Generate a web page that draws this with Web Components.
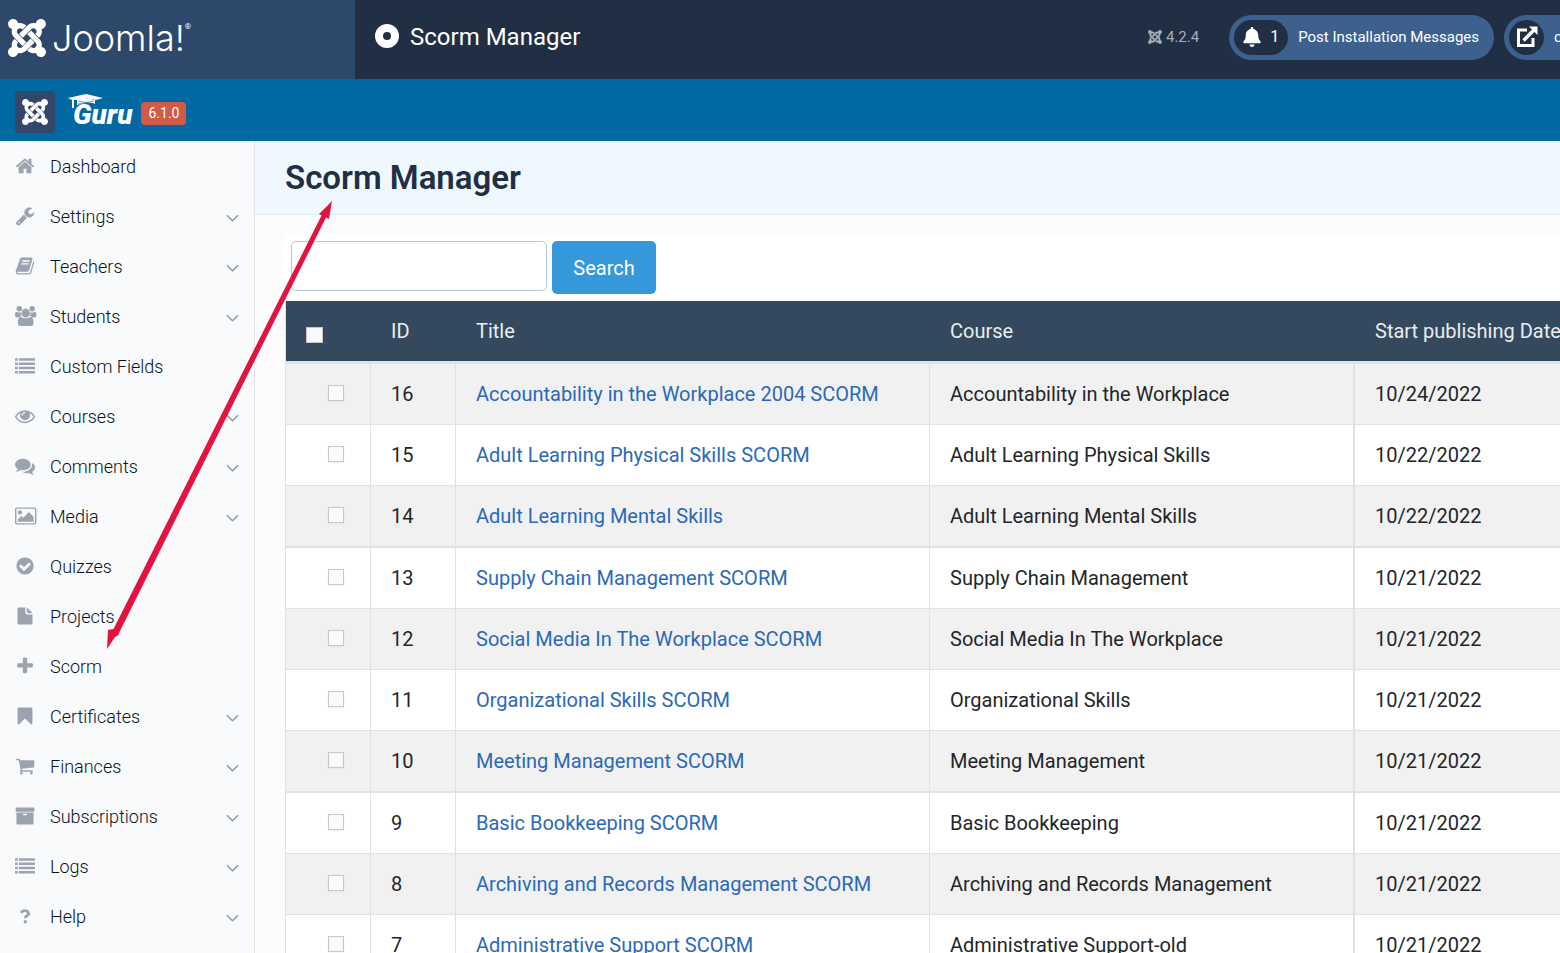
<!DOCTYPE html>
<html lang="en">
<head>
<meta charset="utf-8">
<title>Scorm Manager</title>
<style>
  html, body { margin: 0; height: 100%; }
  body { font-family: Roboto, "Liberation Sans", sans-serif; color: #22262a; }
</style>
</head>
<body>
<guru-app></guru-app>
<script>
const JOOMLA = 'M.6 92.1C.6 58.8 27.4 32 60.4 32c30 0 54.5 21.9 59.2 50.2 32.6-7.6 67.1.6 96.5 30l-44.3 44.3c-20.5-20.5-42.6-16.3-55.4-3.5-14.3 14.3-14.3 37.9 0 52.2l99.5 99.5-44 44.3c-87.7-87.2-49.7-49.7-99.8-99.7-26.8-26.5-35-64.8-24.8-98.9C20.4 144.6.6 120.7.6 92.1zm129.5 116.4l44.3 44.3c10-10 89.7-89.7 99.7-99.8 14.3-14.3 37.6-14.3 51.9 0 12.8 12.8 17 35-3.5 55.4l44 44.3c31.2-31.2 38.5-67.6 28.9-101.2 29.2-4.1 51.9-29.2 51.9-59.5 0-33.2-26.8-60.1-59.8-60.1-30.3 0-55.4 22.5-59.5 51.6-33.8-9.9-71.7-1.5-98.3 25.1-18.3 19.1-71.1 71.5-99.6 99.9zm266.3 152.2c8.2-32.7-.9-68.5-26.3-93.9-11.8-12.2 5 4.7-99.5-99.7l-44.3 44.3 99.7 99.7c14.3 14.3 14.3 37.6 0 51.9-12.8 12.8-35 17-55.4-3.5l-44 44.3c27.6 30.2 68 38.8 102.7 28 5.5 27.4 29.7 48.1 58.9 48.1 33 0 59.8-26.8 59.8-60.1 0-30.2-22.5-55-51.6-59.1zm-84.3-53.1l-44-44.3c-87 86.4-50.4 50.4-99.7 99.8-14.3 14.3-37.6 14.3-51.9 0-13.1-13.4-16.9-35.3 3.2-55.4l-44-44.3c-30.2 30.2-38 65.2-29.5 98.3-26.7 6-46.2 29.9-46.2 58.2C0 453.2 26.8 480 59.8 480c28.6 0 52.5-19.8 58.6-46.7 32.7 8.2 68.5-.6 94.2-26 32.1-32 12.2-12.4 99.5-99.7z';
const listRows = [196, 580, 964, 1348].map(y =>
  `<rect x="0" y="${y}" width="256" height="224" rx="28"/><rect x="350" y="${y}" width="1442" height="224" rx="28"/>`).join('');
const p = d => `<path d="${d}"/>`;
const ICONS = {
  joomla: ['0 32 448 448', p(JOOMLA)],
  home: ['0 0 1792 1792', p('M1472 992v480q0 26-19 45t-45 19h-384v-384h-256v384h-384q-26 0-45-19t-19-45v-480q0-1 .5-3t.5-3l575-474 575 474q1 2 1 6zm223-69l-62 74q-8 9-21 11h-3q-13 0-21-7l-692-577-692 577q-12 8-24 7-13-2-21-11l-62-74q-8-10-7-23.5t11-21.5l719-599q32-26 76-26t76 26l244 204v-195q0-14 9-23t23-9h192q14 0 23 9t9 23v408l219 182q10 8 11 21.5t-7 23.5z')],
  wrench: ['0 0 1792 1792', p('M448 1472q0-26-19-45t-45-19-45 19-19 45 19 45 45 19 45-19 19-45zm644-420l-682 682q-37 37-90 37-52 0-91-37l-106-108q-38-36-38-90 0-53 38-91l681-681q39 98 114.5 173.5t173.5 114.5zm634-435q0 39-23 106-47 134-164.5 217.5t-258.5 83.5q-185 0-316.5-131.5t-131.5-316.5 131.5-316.5 316.5-131.5q58 0 121.5 16.5t107.5 46.5q16 11 16 28t-16 28l-293 169v224l193 107q5-3 79-48.5t135.5-81 70.5-35.5q15 0 23.5 10t8.5 25z')],
  book: ['0 0 1792 1792', p('M1703 478q40 57 18 129l-275 906q-19 64-76.5 107.5t-122.5 43.5h-923q-77 0-148.5-53.5t-99.5-131.5q-24-67-2-127 0-4 3-27t4-37q1-8-3-21.5t-3-19.5q2-11 8-21t16.5-23.5 16.5-23.5q23-38 45-91.5t30-91.5q3-10 .5-30t-.5-28q3-11 17-28t17-23q21-36 42-92t25-90q1-9-2.5-32t.5-28q4-13 22-30.5t22-22.5q19-26 42.5-84.5t27.5-96.5q1-8-3-25.5t-2-26.5q2-8 9-18t18-23 17-21q8-12 16.5-30.5t15-35 16-36 19.5-32 26.5-23.5 36-11.5 47.5 5.5l-1 3q38-9 51-9h761q74 0 114 56t18 130l-274 906q-36 119-71.5 153.5t-128.5 34.5h-869q-27 0-38 15-11 16-1 43 24 70 144 70h923q29 0 56-15.5t35-41.5l300-987q7-22 5-57 38 15 59 43zm-1064 2q-4 13 2 22.5t20 9.5h608q13 0 25.5-9.5t16.5-22.5l21-64q4-13-2-22.5t-20-9.5h-608q-13 0-25.5 9.5t-16.5 22.5zm-83 256q-4 13 2 22.5t20 9.5h608q13 0 25.5-9.5t16.5-22.5l21-64q4-13-2-22.5t-20-9.5h-608q-13 0-25.5 9.5t-16.5 22.5z')],
  users: ['0 0 1792 1792', '<circle cx="384" cy="256" r="245"/><circle cx="1536" cy="256" r="245"/><circle cx="960" cy="640" r="384"/><path d="M590 896Q430 900 325 1024H195Q0 1024 0 820Q0 512 130 512Q150 530 230 560T384 585Q460 585 530 555Q500 740 590 896zM1330 896Q1490 900 1595 1024H1725Q1920 1024 1920 820Q1920 512 1790 512Q1770 530 1690 560T1536 585Q1460 585 1390 555Q1420 740 1330 896zM520 960Q640 1100 960 1100T1400 960Q1664 970 1664 1530Q1664 1792 1400 1792H520Q256 1792 256 1530Q256 970 520 960z"/>'],
  list: ['0 0 1792 1792', listRows],
  eye: ['0 0 1792 1792', p('M1664 960q-152-236-381-353 61 104 61 225 0 185-131.5 316.5t-316.5 131.5-316.5-131.5-131.5-316.5q0-121 61-225-229 117-381 353 133 205 333.5 326.5t434.5 121.5 434.5-121.5 333.5-326.5zm-720-384q0-20-14-34t-34-14q-125 0-214.5 89.5t-89.5 214.5q0 20 14 34t34 14 34-14 14-34q0-86 61-147t147-61q20 0 34-14t14-34zm848 384q0 34-20 69-140 230-376.5 368.5t-499.5 138.5-499.5-139-376.5-368q-20-35-20-69t20-69q140-229 376.5-368t499.5-139 499.5 139 376.5 368q20 35 20 69z')],
  comments: ['0 0 1792 1792', p('M1408 768q0 139-94 257t-256.5 186.5-353.5 68.5q-86 0-176-16-124 88-278 128-36 9-86 16h-3q-11 0-20.5-8t-11.5-21q-1-3-1-6.5t.5-6.5 2-6l2.5-5 3.5-5.5 4-5 4.5-5 4-4.5q5-6 23-25t26-29.5 22.5-29 25-38.5 20.5-44q-124-72-195-177t-71-224q0-139 94-257t256.5-186.5 353.5-68.5 353.5 68.5 256.5 186.5 94 257zm384 256q0 120-71 224.5t-195 176.5q10 24 20.5 44t25 38.5 22.5 29 26 29.5 23 25q1 1 4 4.5t4.5 5 4 5 3.5 5.5l2.5 5 2 6 .5 6.5-1 6.5q-3 14-13 22t-22 7q-50-7-86-16-154-40-278-128-90 16-176 16-271 0-472-132 58 4 88 4 161 0 309-45t264-129q125-92 192-212t67-254q0-77-23-152 129 71 204 178t75 230z')],
  picture: ['0 0 1792 1792', '<path fill-rule="evenodd" d="M160 128H1760Q1920 128 1920 288V1504Q1920 1664 1760 1664H160Q0 1664 0 1504V288Q0 128 160 128zM160 256Q128 256 128 288V1504Q128 1536 160 1536H1760Q1792 1536 1792 1504V288Q1792 256 1760 256z"/><circle cx="448" cy="576" r="192"/><path d="M1664 960V1408H256V1216L576 896L736 1056L1248 544z"/>'],
  check: ['0 0 1792 1792', p('M1412 734q0-28-18-46l-91-90q-19-19-45-19t-45 19l-408 407-226-226q-19-19-45-19t-45 19l-91 90q-18 18-18 46 0 27 18 45l362 362q19 19 45 19 27 0 46-19l543-543q18-18 18-45zm252 162q0 209-103 385.5t-279.5 279.5-385.5 103-385.5-103-279.5-279.5-103-385.5 103-385.5 279.5-279.5 385.5-103 385.5 103 279.5 279.5 103 385.5z')],
  file: ['0 0 1792 1792', p('M1056 512V128Q1078 136 1092 150L1514 572Q1540 598 1552 640H1184Q1056 640 1056 512zM928 544Q928 768 1152 768H1568V1568Q1568 1664 1472 1664H320Q224 1664 224 1568V224Q224 128 320 128H928z')],
  plus: ['0 0 1792 1792', p('M1600 736v192q0 40-28 68t-68 28h-416v416q0 40-28 68t-68 28h-192q-40 0-68-28t-28-68v-416h-416q-40 0-68-28t-28-68v-192q0-40 28-68t68-28h416v-416q0-40 28-68t68-28h192q40 0 68 28t28 68v416h416q40 0 68 28t28 68z')],
  bookmark: ['0 0 1792 1792', p('M320 128H1440Q1560 128 1560 250V1540Q1540 1700 1400 1620L896 1130L392 1620Q250 1700 230 1540V250Q230 128 320 128z')],
  cart: ['0 0 1792 1792', p('M704 1536q0 52-38 90t-90 38-90-38-38-90 38-90 90-38 90 38 38 90zm896 0q0 52-38 90t-90 38-90-38-38-90 38-90 90-38 90 38 38 90zm128-1088v512q0 24-16.5 42.5t-40.5 21.5l-1044 122q13 60 13 70 0 16-24 64h920q26 0 45 19t19 45-19 45-45 19h-1024q-26 0-45-19t-19-45q0-11 8-31.5t16-36 21.5-40 15.5-29.5l-177-823h-204q-26 0-45-19t-19-45 19-45 45-19h256q16 0 28.5 6.5t19.5 15.5 13 24.5 8 26 5.5 29.5 4.5 26h1201q26 0 45 19t19 45z')],
  archive: ['0 0 1792 1792', '<rect x="64" y="128" width="1664" height="384" rx="64"/><path fill-rule="evenodd" d="M128 576H1664V1600Q1664 1664 1600 1664H192Q128 1664 128 1600zM768 704Q704 704 704 768T768 832H1024Q1088 832 1088 768T1024 704z"/>'],
  help: ['0 0 1792 1792', '<path d="M560 620Q640 420 900 420T1220 680Q1220 800 1060 880Q930 950 930 1090" fill="none" stroke="currentColor" stroke-width="250"/><rect x="790" y="1270" width="270" height="266" rx="40"/>'],
  bell: ['0 0 448 512', p('M224 512c35.32 0 63.97-28.65 63.97-64H160.03c0 35.35 28.65 64 63.97 64zm215.39-149.71c-19.32-20.76-55.47-51.99-55.47-154.29 0-77.7-54.48-139.9-127.94-155.16V32c0-17.67-14.32-32-31.98-32s-31.98 14.33-31.98 32v20.84C118.56 68.1 64.08 130.3 64.08 208c0 102.3-36.15 133.53-55.47 154.29-6 6.45-8.66 14.16-8.61 21.71.11 16.4 12.98 32 32.1 32h383.8c19.12 0 32-15.6 32.1-32 .05-7.55-2.61-15.27-8.61-21.71z')],
  external: ['0 0 22 22', '<path d="M11 4H2.5V19.500H17V12" fill="none" stroke="currentColor" stroke-width="3"/><path d="M7.500 14.500L18 4" stroke="currentColor" stroke-width="3.400"/><path d="M13 .5H21.500V9z"/>'],
  chevron: ['0 0 14 8', '<path d="M1 1L7 7L13 1" fill="none" stroke="currentColor" stroke-width="1.500"/>'],
  disc: ['0 0 24 24', '<path fill-rule="evenodd" d="M12 0a12 12 0 1 0 0 24a12 12 0 0 0 0-24zM12 8a4 4 0 1 1 0 8a4 4 0 0 1 0-8z"/>'],
  gradcap: ['0 0 36 16', '<path d="M0 4L18 0L35 4L28 6L24 5Q18 4 11 6L6 6V14H4V6z"/><path d="M9 6Q18 3 27 6V10Q24 8 18 9Q12 10 9 11z"/><path d="M10 7L26 10M10 10L26 7" fill="none" stroke="#0069a1" stroke-width=".6"/>']
};

class GuruElement extends HTMLElement {
  connectedCallback() {
    if (this.shadowRoot) return;
    this.attachShadow({ mode: 'open' }).innerHTML = this.render();
  }
}

class GuruIcon extends GuruElement {
  render() {
    const [box, body] = ICONS[this.getAttribute('name')];
    return `<style>
      :host { display: block; flex: none; width: 20px; height: 20px; }
      svg { display: block; width: 100%; height: 100%; overflow: visible; fill: currentColor; }
    </style><svg viewBox="${box}" aria-hidden="true">${body}</svg>`;
  }
}

class JoomlaHeader extends GuruElement {
  render() {
    return `<style>
      :host { display: flex; flex: none; height: 79px; background: #212f45; color: #fff; overflow: hidden; }
      .brand { display: flex; width: 355px; height: 75px; padding-bottom: 4px; align-items: center; gap: 6px; background: #2e486b; flex: none; color: #fff; text-decoration: none; }
      .brand guru-icon { width: 38px; height: 38px; margin-left: 8px; }
      .word { font: 300 36px/38px Inter, sans-serif; display: flex; }
      sup { font: 8px/16px Roboto, sans-serif; }
      .title { display: flex; align-items: center; gap: 11px; flex: 1; padding-left: 20px; padding-bottom: 6px; }
      h1 { font-size: 24px; line-height: 30px; font-weight: 400; margin: 0; }
      .disc { width: 24px; height: 24px; padding-bottom: 2px; }
      .tools { display: flex; align-items: center; padding-bottom: 4px; font-size: 15px; line-height: 20px; }
      .version { display: flex; align-items: center; gap: 4px; color: #a6adb6; margin-right: 30px; padding-bottom: 2px; }
      .version guru-icon { width: 14px; height: 14px; }
    </style>
    <a class="brand" href="#" aria-label="Joomla home"><guru-icon name="joomla"></guru-icon><span class="word">Joomla!<sup>®</sup></span></a>
    <div class="title"><guru-icon class="disc" name="disc"></guru-icon><h1>Scorm Manager</h1></div>
    <div class="tools">
      <span class="version"><guru-icon name="joomla"></guru-icon>4.2.4</span>
      <header-pill icon="bell" count="1">Post Installation Messages</header-pill>
      <header-pill icon="external" flush>o</header-pill>
    </div>`;
  }
}

class HeaderPill extends GuruElement {
  render() {
    const count = this.getAttribute('count');
    return `<style>
      :host { display: block; margin-right: 10px; }
      :host([flush]) { margin-right: 0; }
      a { display: flex; align-items: center; gap: 10px; height: 45px; box-sizing: border-box; padding: 5px 15px 5px 5px; border-radius: 23px; background: #3d618f; color: #fff; text-decoration: none; white-space: nowrap; }
      .knob { display: flex; align-items: center; justify-content: center; gap: 9px; height: 35px; min-width: 35px; padding-bottom: 2px; box-sizing: border-box; border-radius: 18px; background: #212f45; font-size: 16px; }
      .knob.wide { padding: 0 9px 2px; }
      .label { padding-bottom: 2px; }
      guru-icon { width: 22px; height: 22px; }
      .wide guru-icon { width: 18px; height: 20px; }
      :host([flush]) a { padding-right: 0; border-radius: 23px 0 0 23px; }
      :host([flush]) .label { width: 6px; overflow: hidden; }
    </style><a href="#"><span class="knob ${count ? 'wide' : ''}"><guru-icon name="${this.getAttribute('icon')}"></guru-icon>${count ? `<span>${count}</span>` : ''}</span><span class="label"><slot></slot></span></a>`;
  }
}

class GuruBar extends GuruElement {
  render() {
    return `<style>
      :host { display: flex; flex: none; align-items: center; height: 62px; box-sizing: border-box; padding: 4px 0 0 15px; background: #0069a1; color: #fff; }
      .back { display: flex; align-items: center; justify-content: center; width: 40px; height: 42px; border-radius: 4px; background: #33476b; color: #fff; }
      .back guru-icon { width: 26px; height: 26px; }
      .logo { position: relative; margin-left: 18px; font: italic 900 28px/34px Roboto, sans-serif; padding-top: 6px; color: #fff; text-decoration: none; }
      .logo guru-icon { position: absolute; left: -5px; top: 2px; width: 36px; height: 16px; }
      .badge { margin: 3px 0 0 9px; padding: 0 7px; border-radius: 4px; background: #d15b47; font-size: 14px; line-height: 23px; }
    </style>
    <a class="back" href="#" aria-label="Joomla"><guru-icon name="joomla"></guru-icon></a>
    <a class="logo" href="#">Guru<guru-icon name="gradcap"></guru-icon></a>
    <span class="badge">6.1.0</span>`;
  }
}

class NavItem extends GuruElement {
  render() {
    return `<style>
      :host { display: block; }
      a { display: flex; align-items: center; gap: 15px; height: 50px; padding: 0 15px; color: #07121f; text-decoration: none; font-size: 18px; font-weight: 300; line-height: 24px; }
      guru-icon { color: #9ba3b1; }
      span { flex: 1; padding-top: 2px; }
      .chev { width: 13px; height: 8px; padding-top: 3px; color: #8c97a6; }
    </style><a href="#"><guru-icon name="${this.getAttribute('icon')}"></guru-icon><span><slot></slot></span>${this.hasAttribute('menu') ? '<guru-icon class="chev" name="chevron"></guru-icon>' : ''}</a>`;
  }
}

class GuruSidebar extends GuruElement {
  render() {
    const items = [['home', 'Dashboard'], ['wrench', 'Settings', 1], ['book', 'Teachers', 1], ['users', 'Students', 1], ['list', 'Custom Fields'], ['eye', 'Courses', 1], ['comments', 'Comments', 1], ['picture', 'Media', 1], ['check', 'Quizzes'], ['file', 'Projects'], ['plus', 'Scorm'], ['bookmark', 'Certificates', 1], ['cart', 'Finances', 1], ['archive', 'Subscriptions', 1], ['list', 'Logs', 1], ['help', 'Help', 1]];
    return `<style>
      :host { display: block; flex: none; width: 254px; background: #f9fafc; border-right: 1px solid #e3e5ea; }
    </style><nav>${items.map(([i, t, m]) => `<nav-item icon="${i}"${m ? ' menu' : ''}>${t}</nav-item>`).join('')}</nav>`;
  }
}

class SearchBar extends GuruElement {
  render() {
    return `<style>
      :host { display: block; }
      form { display: flex; align-items: flex-start; gap: 5px; padding: 6px 6px 7px; }
      input { width: 256px; height: 50px; box-sizing: border-box; border: 1px solid #b5c5de; border-radius: 5px; background: #fff; font: 20px Roboto, sans-serif; padding: 0 12px; }
      button { height: 53px; width: 104px; border: 0; padding: 0; border-radius: 5px; background: #3498db; color: #fff; font: 20px/30px Roboto, sans-serif; }
    </style><form onsubmit="return false"><input type="text" aria-label="Search scorm packages"><button type="submit">Search</button></form>`;
  }
}

class ScormTable extends GuruElement {
  render() {
    const rows = [
      [16, 'Accountability in the Workplace 2004 SCORM', 'Accountability in the Workplace', '10/24/2022'],
      [15, 'Adult Learning Physical Skills SCORM', 'Adult Learning Physical Skills', '10/22/2022'],
      [14, 'Adult Learning Mental Skills', 'Adult Learning Mental Skills', '10/22/2022'],
      [13, 'Supply Chain Management SCORM', 'Supply Chain Management', '10/21/2022'],
      [12, 'Social Media In The Workplace SCORM', 'Social Media In The Workplace', '10/21/2022'],
      [11, 'Organizational Skills SCORM', 'Organizational Skills', '10/21/2022'],
      [10, 'Meeting Management SCORM', 'Meeting Management', '10/21/2022'],
      [9, 'Basic Bookkeeping SCORM', 'Basic Bookkeeping', '10/21/2022'],
      [8, 'Archiving and Records Management SCORM', 'Archiving and Records Management', '10/21/2022'],
      [7, 'Administrative Support SCORM', 'Administrative Support-old', '10/21/2022']];
    return `<style>
      :host { display: block; }
      table { width: 100%; table-layout: fixed; border-collapse: separate; border-spacing: 0; font-size: 20px; line-height: 30px; white-space: nowrap; border-left: 1px solid #dee2e6; }
      .pick, .id { width: 85px; } .name { width: 474px; } .date { width: 205px; }
      th { height: 60px; padding: 0 0 0 20px; background: #34495e; color: #e9edf1; font-weight: 400; text-align: left; border-bottom: 3px solid #dfe1e9; }
      td { height: 60px; padding: 0 0 0 20px; border-bottom: 1px solid #dee2e6; border-right: 1px solid #dee2e6; }
      td:nth-child(4) { border-right-width: 2px; }
      td:last-child { border-right: 0; }
      tr:nth-child(4n+3) td { border-bottom-width: 2px; }
      tbody tr:nth-child(odd) { background: #f1f1f1; }
      td:first-child { padding-left: 42px; }
      input { appearance: none; display: block; width: 16px; height: 16px; margin: 0 0 2px; box-sizing: border-box; border: 1px solid #c8c8c8; background: #fafafa; box-shadow: 0 1px 2px rgba(0,0,0,.05); }
      th input { width: 17px; margin: 8px 0 0; }
      a { color: #2a69b8; text-decoration: none; }
    </style>
    <table>
      <colgroup><col class="pick"><col class="id"><col class="name"><col><col class="date"></colgroup>
      <thead><tr><th><input type="checkbox" aria-label="Select all"></th><th>ID</th><th>Title</th><th>Course</th><th>Start publishing Date</th></tr></thead>
      <tbody>${rows.map(([id, t, c, d]) => `<tr><td><input type="checkbox" aria-label="Select ${id}"></td><td>${id}</td><td><a href="#">${t}</a></td><td>${c}</td><td>${d}</td></tr>`).join('')}</tbody>
    </table>`;
  }
}

class AnnotationArrow extends GuruElement {
  render() {
    return `<style>
      :host { display: block; position: absolute; left: 106px; top: 201px; width: 227px; height: 449px; pointer-events: none; }
      svg { display: block; width: 100%; height: 100%; fill: #e2143f; }
    </style><svg viewBox="0 0 227 449" aria-hidden="true">
      <path d="M226 0L223 18L220 16.500L13.500 431L12.500 434L9 436L1 448L2 429L7.500 428L215.500 14.500L213 13z"/></svg>`;
  }
}

class GuruApp extends GuruElement {
  render() {
    return `<style>
      :host { display: flex; flex-direction: column; position: relative; height: 100vh; overflow: hidden; }
      .body { display: flex; flex: 1; min-height: 0; }
      main { flex: 1; min-width: 0; overflow: hidden; background: #fcfcfc; }
      header { height: 74px; box-sizing: border-box; padding: 16px 30px; background: #f0f8ff; border-bottom: 1px solid #dcecf6; }
      h2 { margin: 0; font-size: 33px; line-height: 42px; font-weight: 600; color: #212f45; }
      section { margin: 20px 0 0 30px; background: #fff; }
    </style>
    <joomla-header></joomla-header>
    <guru-bar></guru-bar>
    <div class="body">
      <guru-sidebar></guru-sidebar>
      <main>
        <header><h2>Scorm Manager</h2></header>
        <section><search-bar></search-bar><scorm-table></scorm-table></section>
      </main>
    </div>
    <annotation-arrow></annotation-arrow>`;
  }
}

customElements.define('guru-icon', GuruIcon);
customElements.define('header-pill', HeaderPill);
customElements.define('joomla-header', JoomlaHeader);
customElements.define('guru-bar', GuruBar);
customElements.define('nav-item', NavItem);
customElements.define('guru-sidebar', GuruSidebar);
customElements.define('search-bar', SearchBar);
customElements.define('scorm-table', ScormTable);
customElements.define('annotation-arrow', AnnotationArrow);
customElements.define('guru-app', GuruApp);
</script>
</body>
</html>
